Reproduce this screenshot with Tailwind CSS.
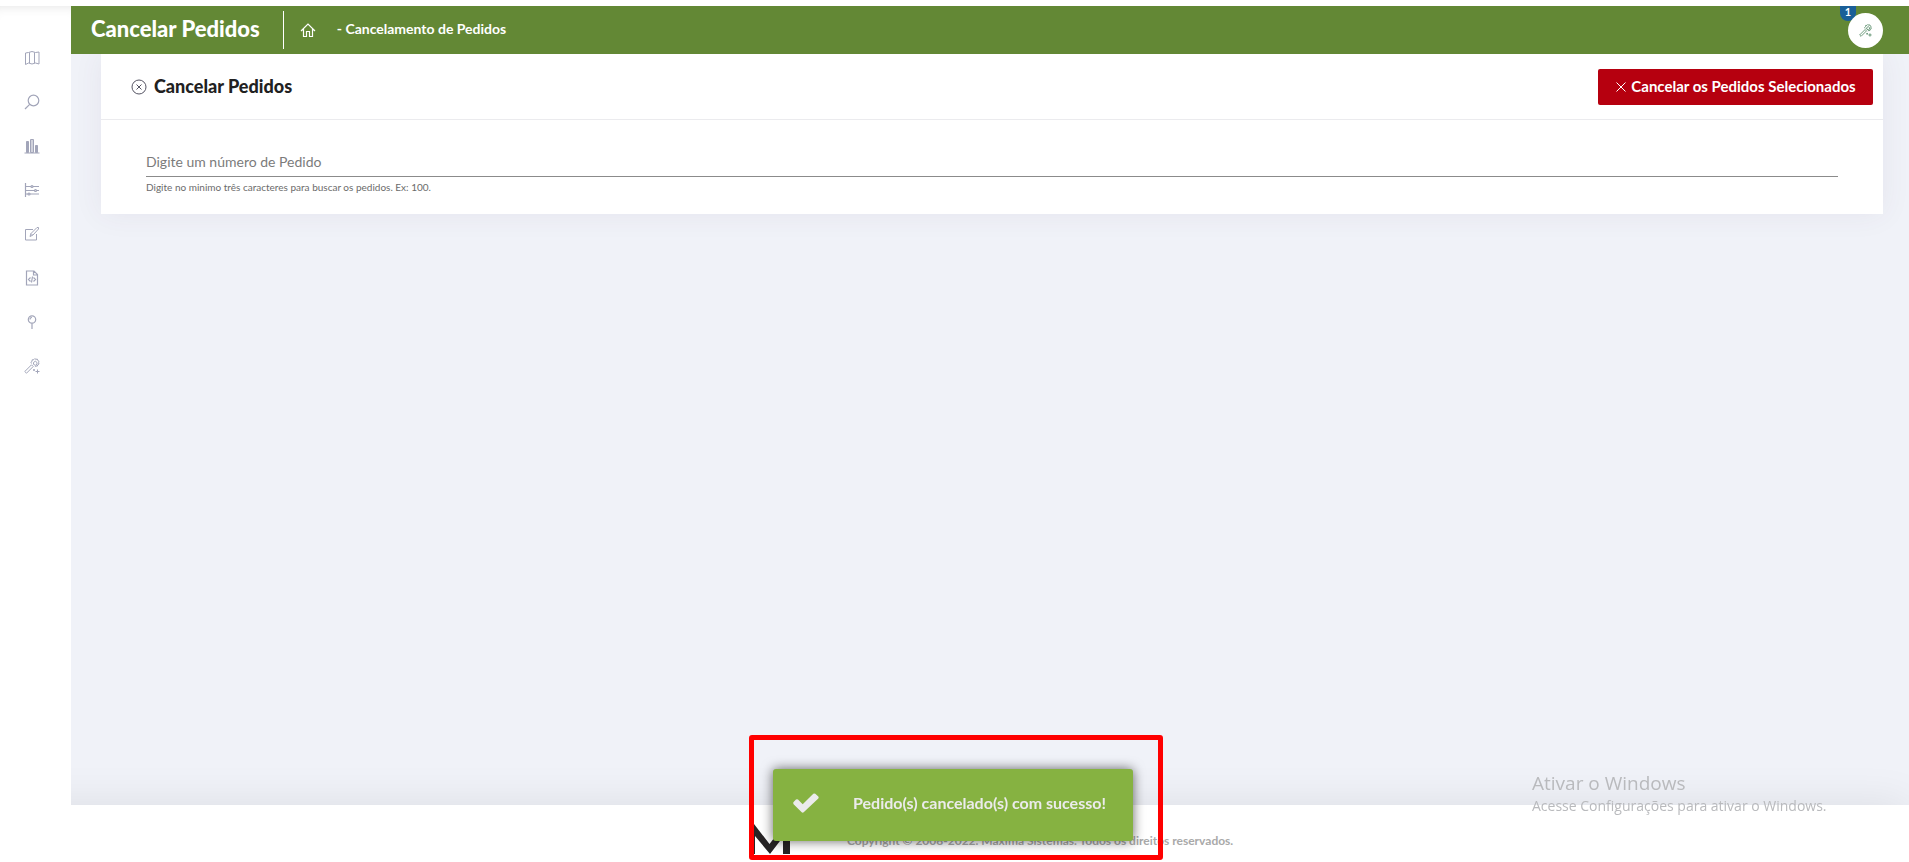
<!DOCTYPE html>
<html lang="pt-BR">
<head>
<meta charset="utf-8">
<meta name="viewport" content="width=device-width, initial-scale=1">
<title>Cancelar Pedidos</title>
<script src="https://cdn.jsdelivr.net/npm/@tailwindcss/browser@4"></script>
</head>
<body class="flex h-screen flex-col overflow-hidden bg-white pt-[6px] font-['Lato','Open_Sans',sans-serif]">
<svg class="hidden" aria-hidden="true">
  <symbol id="wand" viewBox="0 0 16 16">
    <path d="M.8 13.500 7.500 6.800 9.200 8.500 2.500 15.200.8 13.500Z M7.500 5.500l-.5-1.300 1-1 .2-1.400 1.500-.1 1-1 1.200.6 1.400-.2.5 1.400 1.200.8-.4 1.400.4 1.300-1.200.8-.5 1.300-1.400-.1-1 .8 M9.500 4.500l1.800-1.300 1.700 1.300v1.800l-1.700 1-1.800-1Z M10 11v2 M9 12h2 M13.500 11.500v4 M11.500 13.500h4"/>
  </symbol>
</svg>
<div class="flex min-h-0 flex-1">
  <aside class="z-20 w-[71px] shrink-0 bg-white shadow-[inset_0_10px_12px_-10px_rgba(0,0,0,0.12)]">
    <nav aria-label="Menu principal" class="flex flex-col items-center gap-7 pt-11 pr-[7px] text-[#a2a5b9]">
      <a href="#" aria-label="Mapa"><svg class="size-4" viewBox="0 0 16 16" fill="none" stroke="currentColor"><path d="M1.500 3v11.500l3-1.500 3.500 1 3.500-1 3.500 1v-12l-3.500.5-3.500-1-3.500 1-3 .5Z M5.500 2.500v10.500 M10.500 2.500v10.500"/></svg></a>
      <a href="#" aria-label="Buscar"><svg class="size-4" viewBox="0 0 16 16" fill="none" stroke="currentColor" stroke-width="1.200"><circle cx="9.500" cy="6.500" r="5.300"/><path d="M5.700 10.300 1 15"/></svg></a>
      <a href="#" aria-label="Gráficos"><svg class="size-4" viewBox="0 0 16 16" fill="none" stroke="currentColor"><path d="M.5 15h15"/><path fill="currentColor" d="M2.500 3.500h2v11h-2Z M11.500 7.500h2v7h-2Z"/><path d="M6.500 1.500h3v13h-3Z M8 2v12"/></svg></a>
      <a href="#" aria-label="Ajustes"><svg class="size-4" viewBox="0 0 16 16" fill="none" stroke="currentColor" stroke-width="1.200"><path d="M1.500 1v14 M2 4.500h5 M9 4.500h6 M2 8.500h8 M13 8.500h2 M2 12h2 M6 12h9"/><circle cx="8" cy="4.500" r="1"/><circle cx="11.500" cy="8.500" r="1"/><circle cx="5" cy="12" r="1"/></svg></a>
      <a href="#" aria-label="Editar"><svg class="size-4" viewBox="0 0 16 16" fill="none" stroke="currentColor"><path d="M9 3.500H1.500v10.500h11V8 M6 10.500l1-3 6-6h1.500v1.500l-5.500 6-3 1.500Z M7 7.500l1.500 1.500"/></svg></a>
      <a href="#" aria-label="Código"><svg class="size-4" viewBox="0 0 16 16" fill="none" stroke="currentColor" stroke-width="1.200"><path d="M2.500 1h7.500l3.500 3.500v10.500h-11Z M9.500 1v4h4 M6.500 7.500l-2 2 2 2 M9.500 7.500l2 2-2 2 M8.500 6.500l-1 6"/></svg></a>
      <a href="#" aria-label="Local"><svg class="size-4" viewBox="0 0 16 16" fill="none" stroke="currentColor" stroke-width="1.200"><circle cx="8" cy="5.500" r="3.700"/><path d="M8 9.200v5.800 M6 5.500q0-2 2-2"/></svg></a>
      <a href="#" aria-label="Ferramentas"><svg class="size-4" viewBox="0 0 16 16" fill="none" stroke="currentColor"><use href="#wand"/></svg></a>
    </nav>
  </aside>

  <div class="flex min-w-0 flex-1 flex-col bg-[#f0f2f8]">
    <header class="z-10 flex h-12 shrink-0 items-center bg-[#638835] pr-[26px] pl-5 text-white">
      <h1 class="pb-[2px] text-[22px] leading-6 font-black">Cancelar Pedidos</h1>
      <div class="ml-[23px] h-[38px] w-px bg-white"></div>
      <a href="#" aria-label="Início" class="ml-4"><svg class="size-4" viewBox="0 0 16 16" fill="none" stroke="currentColor" stroke-width="1.200"><path d="M1 9 8 2l7 7 M3.500 7v7.500h3V9.500h3v5h3V7"/></svg></a>
      <span class="ml-[21px] pb-[2px] text-sm font-bold">- Cancelamento de Pedidos</span>
      <div class="relative ml-auto flex h-12 items-center pt-px">
        <span class="absolute top-0 -left-2 h-[15px] w-4 rounded-b-full bg-[#1a5f98] text-center text-[11px] leading-3 font-bold">1</span>
        <button type="button" aria-label="Ferramentas" class="relative flex size-[35px] items-center justify-center rounded-full bg-white text-[#4e8560]"><svg class="size-[13px]" viewBox="0 0 16 16" fill="none" stroke="currentColor"><use href="#wand"/></svg></button>
      </div>
    </header>

    <main class="flex-1 pr-[26px] pl-[30px]">
      <section class="bg-white shadow-[0_0_28px_rgba(82,63,105,0.07)]">
        <div class="flex h-[66px] items-center border-b border-[#ebebee] pr-[10px] pl-[30px]">
          <svg class="size-4 text-[#555463]" viewBox="0 0 16 16" fill="none" stroke="currentColor"><circle cx="8" cy="8" r="7"/><path d="m5.500 5.500 5 5m0-5-5 5"/></svg>
          <h2 class="ml-[7px] pb-[2px] text-lg leading-6 font-black text-[#212121]">Cancelar Pedidos</h2>
          <button type="button" class="ml-auto flex h-9 w-[275px] items-center justify-center gap-1 rounded-[2px] bg-[#b6000f] text-[15px] font-bold text-white"><svg class="size-3" viewBox="0 0 12 12" fill="none" stroke="currentColor"><path d="m1.500 1.500 9 9m0-9-9 9"/></svg>Cancelar os Pedidos Selecionados</button>
        </div>
        <div class="px-[45px] pt-[30px] pb-[18px]">
          <input id="pedido" type="text" aria-label="Digite um número de Pedido" aria-describedby="ajuda" placeholder="Digite um número de Pedido" class="block h-[27px] w-full border-b border-[#8b8b8b] pb-1 text-sm outline-none placeholder:text-[#7b7b7b]">
          <p id="ajuda" class="pt-1 pb-[2px] text-[10px] leading-[13px] text-[#6b6b6b]">Digite no minimo três caracteres para buscar os pedidos. Ex: 100.</p>
        </div>
      </section>
    </main>
  </div>
</div>

<footer class="z-10 flex h-[57px] shrink-0 items-center justify-center bg-white pt-[10px] pl-[82px] shadow-[0_0_45px_rgba(0,0,0,0.09)]">
  <svg class="h-[30px] w-[41px] text-[#272425]" viewBox="0 0 41 30" fill="currentColor" role="img" aria-label="Máxima"><path d="M0 30V0h5l15.500 20L36 0h5v30h-7V13L21 30 6 12v18Z"/></svg>
  <p class="ml-[57px] w-[395px] pt-1 text-xs font-bold text-[#a9a9a9]">Copyright © 2008-2022. Máxima Sistemas. Todos os direitos reservados.</p>
</footer>

<div role="status" class="fixed top-[769px] left-[773px] z-20 flex h-[72px] w-[360px] items-center rounded-[3px] bg-[#86b241] pb-1 pl-5 text-[#ebebeb] shadow-[0_0_12px_rgba(0,0,0,0.6)]">
  <svg class="h-5 w-[26px]" viewBox="0 0 26 20" fill="currentColor"><path d="M.6 9 3 6.600Q4 5.800 5 6.600L9.700 11.200 20.300.8Q21.300 0 22.300.8L25.300 3.600Q26 4.500 25.300 5.400L10.700 19.300Q9.700 20 8.700 19.300L.6 11.200Q-.2 10 .6 9Z"/></svg>
  <span class="ml-[34px] text-base font-bold">Pedido(s) cancelado(s) com sucesso!</span>
</div>
<div class="pointer-events-none fixed top-[735px] left-[749px] z-30 h-[125px] w-[414px] rounded-[3px] border-[5px] border-[#ff0000]"></div>
<div class="pointer-events-none fixed top-[770px] right-[77px] z-30 w-[300px] font-['Open_Sans',sans-serif] whitespace-nowrap text-[#b9babd]">
  <p class="text-[19px] leading-[26px]">Ativar o Windows</p>
  <p class="text-sm leading-5">Acesse Configurações para ativar o Windows.</p>
</div>
</body>
</html>
